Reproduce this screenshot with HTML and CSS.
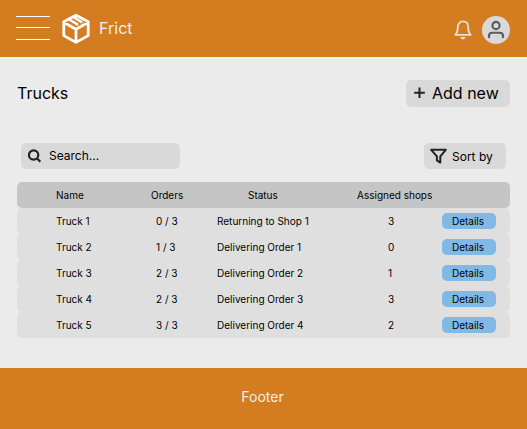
FILE: index.html
```html
<!DOCTYPE html>
<html lang="en">
<head>
<meta charset="utf-8">
<title>Frict</title>
<link rel="stylesheet" href="styles.css">
</head>
<body>
<header class="topbar">
  <div class="menu"><span></span><span></span><span></span></div>
  <svg class="logo" width="30" height="32" viewBox="0 0 30 32" fill="none" stroke="#fff" stroke-width="2.8" stroke-linejoin="round" stroke-linecap="round"><path d="M15 2.2 27.2 8.8V22.6L15 29.4 2.8 22.6V8.8Z M3.4 9.8 15 16.2 26.6 9.8 M15 16.2V29"/><path d="M9.2 7 16.2 11.4M13.4 4.6 20.4 9" stroke-width="2.5"/></svg>
  <span class="brand">Frict</span>
  <svg class="bell" width="18" height="20" viewBox="0 0 18 20" fill="none" stroke="#e6e0d9" stroke-width="1.8" stroke-linecap="round" stroke-linejoin="round"><path d="M1.3 14.8C3.2 13 3.8 11.8 3.8 7.3 3.8 3.8 5.8 1.4 9 1.4S14.2 3.8 14.2 7.3C14.2 11.8 14.8 13 16.7 14.8Z"/><path d="M7.2 17.6H10.8Q9 20 7.2 17.6Z" stroke-width="1.2"/></svg>
  <span class="avatar"><svg width="18" height="20" viewBox="0 0 18 20" fill="none" stroke="#5b5b5b" stroke-width="2.1" stroke-linecap="round"><circle cx="9" cy="5.5" r="3.6"/><path d="M2 17.2V16Q2 12.7 5.3 12.7H12.7Q16 12.7 16 16V17.2"/></svg></span>
</header>
<main>
  <div class="heading">
    <h1>Trucks</h1>
    <button class="add"><svg width="12" height="12" viewBox="0 0 12 12" stroke="#222" stroke-width="2"><path d="M5.5 .5V11M.2 5.7H10.8"/></svg>Add new</button>
  </div>
  <div class="tools">
    <div class="search"><svg width="14" height="14" viewBox="0 0 14 14" fill="none" stroke="#222" stroke-width="2.2"><circle cx="5.6" cy="6" r="4.7"/><path d="M8.9 9.3 12.3 12.7"/></svg>Search...</div>
    <button class="sort"><svg width="17" height="16" viewBox="0 0 17 16" fill="none" stroke="#222" stroke-width="2" stroke-linejoin="round"><path d="M1.2 1.8H15.8L10.3 8.4V14.6L6.9 12.3V8.4Z"/></svg>Sort by</button>
  </div>
  <div class="table">
    <div class="row head"><span>Name</span><span>Orders</span><span>Status</span><span>Assigned shops</span></div>
    <div class="row"><span>Truck 1</span><span>0 / 3</span><span>Returning to Shop 1</span><span>3</span><button>Details</button></div>
    <div class="row"><span>Truck 2</span><span>1 / 3</span><span>Delivering Order 1</span><span>0</span><button>Details</button></div>
    <div class="row"><span>Truck 3</span><span>2 / 3</span><span>Delivering Order 2</span><span>1</span><button>Details</button></div>
    <div class="row"><span>Truck 4</span><span>2 / 3</span><span>Delivering Order 3</span><span>3</span><button>Details</button></div>
    <div class="row"><span>Truck 5</span><span>3 / 3</span><span>Delivering Order 4</span><span>2</span><button>Details</button></div>
  </div>
</main>
<footer>Footer</footer>
</body>
</html>
```
FILE: styles.css
```css
* { box-sizing: border-box; }
body { margin: 0; height: 429px; display: flex; flex-direction: column; background: #ebebeb; color: #000; font-family: Inter, sans-serif; }
svg { display: block; flex: none; }
button { border: 0; margin: 0; font-family: inherit; color: inherit; }
.topbar { height: 57px; display: flex; align-items: center; padding: 0 17px 0 16px; background: #d37d20; color: #f7ede2; }
.menu { width: 34px; height: 24px; margin-bottom: 1px; display: grid; grid-template-rows: 1px 1px 1px; row-gap: 10px; }
.menu span { background: #fff; }
.menu span:last-child { margin: 1px 0 -1px; }
.logo { margin-left: 11px; }
.brand { margin: 0 0 2px 8px; font-size: 16px; }
.bell { margin: 3px 10px 0 auto; }
.avatar { width: 28px; height: 28px; margin-top: 3px; border-radius: 50%; background: #d9d9d9; display: grid; place-items: center; }
main { flex: 1; border-top: 1px solid #f6f4f2; padding: 22px 17px 0; }
.heading { height: 27px; display: flex; justify-content: space-between; align-items: center; }
h1 { margin: 0 0 2px; font-size: 16px; font-weight: 400; }
.add, .sort, .search { display: flex; align-items: center; background: #d9d9d9; border-radius: 5px; }
.add { width: 104px; height: 27px; padding: 0 0 1px 8px; gap: 6px; font-size: 16px; }
.tools { display: flex; justify-content: space-between; margin: 36px 4px 13px; height: 26px; }
.search { width: 159px; padding: 0 0 1px 7px; gap: 7px; font-size: 12px; }
.sort { width: 82px; padding: 0 0 0 6px; gap: 5px; font-size: 12px; }
.row { height: 26px; display: grid; grid-template-columns: 100px 61px 171px 54px 54px; padding-left: 39px; align-items: center; background: #dfdfdf; border-radius: 5px; font-size: 10px; }
.head { grid-template-columns: 95px 97px 109px 1fr; background: #c5c5c5; }
.row button { height: 16px; padding: 0 2px 0 0; border-radius: 5px; background: #80b9e6; font-size: 10px; }
footer { height: 61px; display: grid; place-items: center; padding: 0 2px 4px 0; background: #d37d20; color: #f7ede2; font-size: 14px; }
```
